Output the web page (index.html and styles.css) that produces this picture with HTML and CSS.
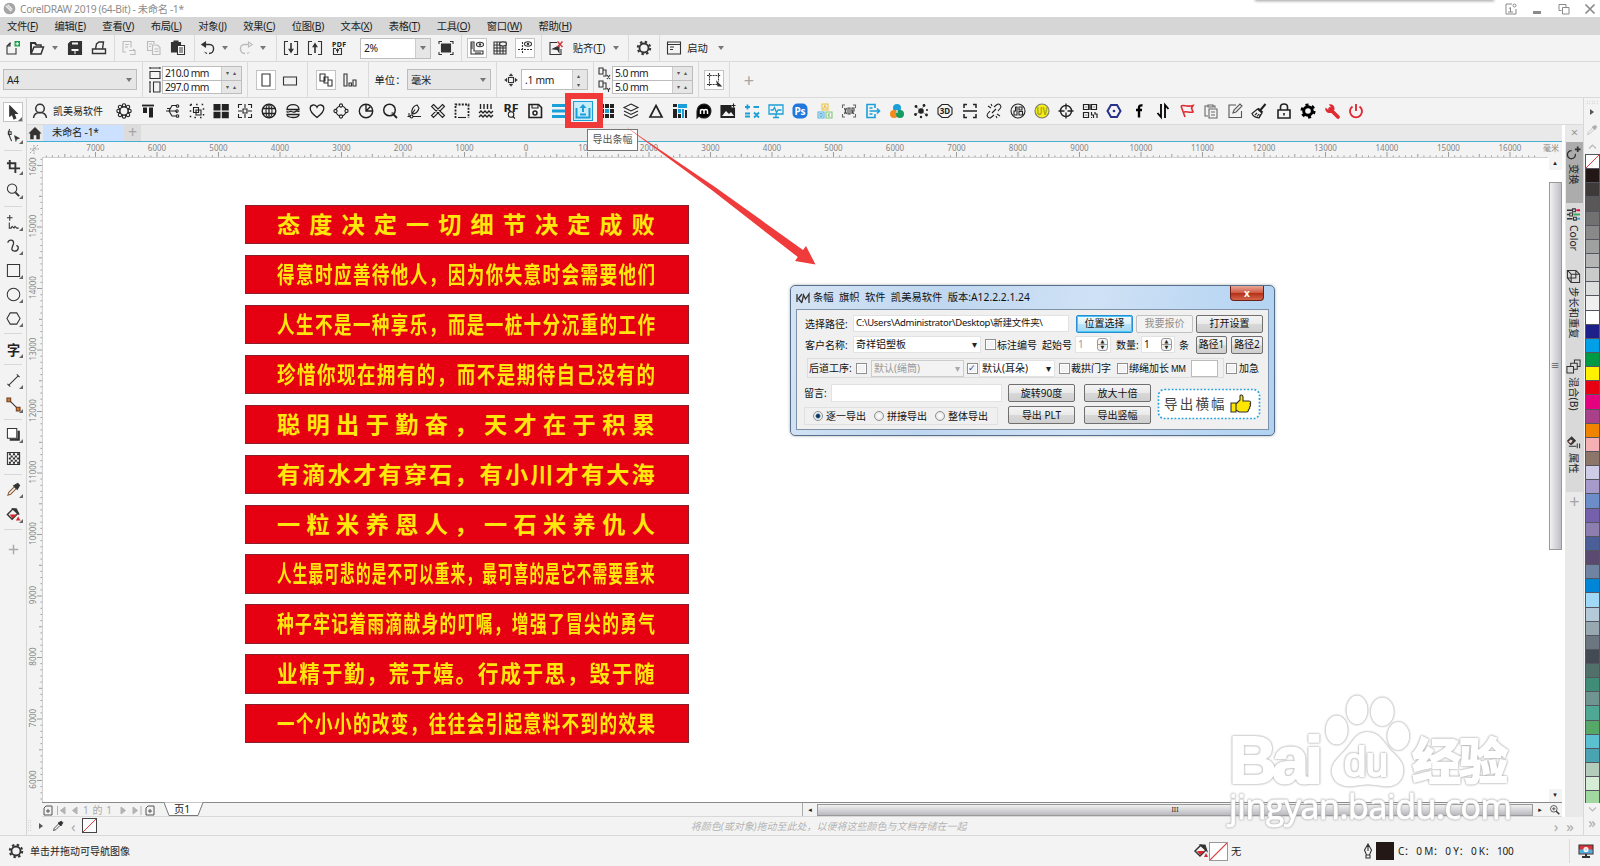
FILE: index.html
```html
<!DOCTYPE html>
<html lang="zh-CN">
<head>
    <meta charset="UTF-8">
    <meta name="viewport" content="width=device-width, initial-scale=1.0">
    <title>CorelDRAW 2019</title>
    <link rel="stylesheet" href="styles.css">
</head>
<body>

<header class="titlebar">
    <svg class="logo" viewBox="0 0 14 14"><circle cx="7" cy="7" r="6.3" fill="#a5a5a5"/><path d="M3 4l6 6M5 3l5 5" stroke="#eee" stroke-width="1.6"/></svg>
    <span>CorelDRAW 2019 (64-Bit) - 未命名 -1*</span>
    <div class="window-shade"></div>
    <div class="window-buttons">
        <svg viewBox="0 0 12 12"><path d="M7 1H1v10h10V6M3 9h5M5.500 9V4.500l-1.500 1"/><circle cx="9.500" cy="2.500" r="1.500"/></svg>
        <svg viewBox="0 0 12 12"><path d="M2 9.500h8" stroke-width="3"/></svg>
        <svg viewBox="0 0 12 12"><path d="M3.500 7.500H1v-6h7v2.500M4.500 4.500h6.500v6.500H4.500z"/></svg>
        <svg viewBox="0 0 12 12"><path d="M1.500 1.500l9 9m0-9l-9 9" stroke-width="1.700"/></svg>
    </div>
</header>

<nav class="menubar">
    <span>文件(<u>F</u>)</span><span>编辑(<u>E</u>)</span><span>查看(<u>V</u>)</span><span>布局(<u>L</u>)</span><span>对象(<u>J</u>)</span><span>效果(<u>C</u>)</span><span>位图(<u>B</u>)</span><span>文本(<u>X</u>)</span><span>表格(<u>T</u>)</span><span>工具(<u>O</u>)</span><span>窗口(<u>W</u>)</span><span>帮助(<u>H</u>)</span>
</nav>

<div class="toolbar standard">
    <svg class="i" viewBox="0 0 16 16"><path d="M6 3H5L2 6v8h9V8M2 6h3V3"/><path d="M9.500 1h5.500v5.500H9.500z" fill="#1a9c4b" stroke="none"/><path d="M12.200 2v3.500M10.500 3.800H14" stroke="#fff" stroke-width="1"/></svg>
    <svg class="i" viewBox="0 0 16 16"><path d="M2 14V3h4l1.500 2H12v2M2 14h10l2.500-7H5z" stroke-width="1.500"/><path d="M2 13L2 3h4l1 2" stroke-width="2"/></svg>
    <i class="caret"></i>
    <svg class="i" viewBox="0 0 16 16"><path class="f" d="M1.500 4L4 1.500h10.500v13h-13z"/><path d="M5 3.500h6M4.500 10h7" stroke="#f3f3f3" stroke-width="2"/><path d="M8 11v3" stroke="#f3f3f3"/></svg>
    <svg class="i" viewBox="0 0 16 16"><path d="M4 9H1.500v4.500h13V9h-3l1-7H8L5.500 4l-1 5h7" stroke-width="1.400"/></svg>
    <i class="sep"></i>
    <svg class="i off" viewBox="0 0 16 16"><path d="M2 1.500h8v6M2 1.500V12h3M4 4.500h4M4 7h3M8 10.500h6v4H9M12 9l2 1.500"/></svg>
    <svg class="i off" viewBox="0 0 16 16"><path d="M6 10.500H1.500v-9H8V4M3 4h3M3 6.500h2M6.500 5h5l2.500 2.500v7H6.500zM8.500 9h4M8.500 11.500h4"/></svg>
    <svg class="i" viewBox="0 0 16 16"><path class="f" d="M1.500 2.500h9V5H7v7H1.500z"/><path class="f" d="M4 1h4v2H4z"/><path fill="#fff" d="M7.500 5.500h7v9h-7zM9 8h4M9 10h4M9 12h4"/></svg>
    <i class="sep"></i>
    <svg class="i" viewBox="0 0 16 16"><path d="M5 4.500h4.500c6 0 5 9-.5 9" stroke-width="1.400"/><path d="M7 13.500l-3-1.500" stroke-dasharray="2 1"/><path class="f" d="M5.500 2v5L1.800 4.500z"/></svg>
    <i class="caret"></i>
    <svg class="i off" viewBox="0 0 16 16"><path d="M11 4.500H6.500c-6 0-5 9 .5 9" stroke-width="1.400"/><path d="M9 13.500l3-1.500" stroke-dasharray="2 1"/><path d="M10.500 2v5l3.700-2.500z"/></svg>
    <i class="caret"></i>
    <i class="sep"></i>
    <svg class="i" viewBox="0 0 16 16"><path d="M5 1.500H1.500v13H5M11 1.500h3.500v13H11"/><path d="M8 3v8M6.500 9.500L8 12l1.500-2.500z" stroke-width="1.600"/></svg>
    <svg class="i" viewBox="0 0 16 16"><path d="M5 1.500H1.500v13H5M11 1.500h3.500v13H11"/><path d="M8 13V5M6.500 6.500L8 4l1.500 2.500z" stroke-width="1.600"/></svg>
    <svg class="i pdf" viewBox="0 0 16 16"><text x="8" y="7" text-anchor="middle" textLength="14">PDF</text><path d="M5 8.500H2.500v6h8v-6H8M6.500 13V9M5 10.500L6.500 9 8 10.500"/></svg>
    <i></i>
    <div class="combo white"><span>2%</span><b><i class="caret"></i></b></div>
    <svg class="i" viewBox="0 0 16 16"><path class="f" d="M3.500 4h9v8h-9z"/><path d="M1 4V1.500h3M12 1.500h3V4M15 12v2.500h-3M4 14.500H1V12"/></svg>
    <i class="sep"></i>
    <span class="boxed"><svg class="i" viewBox="0 0 16 16"><path d="M2 2h3v9h9v3H2zM2 4h2M2 6h2M2 8h2M7 14v-2M9 14v-2M11 14v-2"/><ellipse cx="11" cy="4.500" rx="3.500" ry="2.200"/><circle cx="11" cy="4.500" r=".7"/></svg></span>
    <svg class="i" viewBox="0 0 16 16"><path d="M2 2v12h12V2zM2 5h12M2 8h12M2 11h12M5 2v12M8 2v12M11 2v12"/><ellipse cx="11" cy="4" rx="3.500" ry="2" fill="#f3f3f3"/></svg>
    <span class="boxed"><svg class="i" viewBox="0 0 16 16"><path d="M5.500 2v12M1 9.500h14" stroke-dasharray="2 1"/><ellipse cx="11" cy="4" rx="3.500" ry="2.200"/><circle cx="11" cy="4" r=".7"/></svg></span>
    <i class="sep"></i>
    <svg class="i" viewBox="0 0 16 16"><path d="M9 2.500H2v12h11V9" /><path class="f" d="M11 6v6l-1.500-2.500L5 9z"/><path d="M9.500 1.500L14.500 7m0-5.500L9.500 7" stroke="#d8393c" stroke-width="1.500"/></svg>
    <span class="label">贴齐(<u>T</u>)</span>
    <i class="caret"></i>
    <i class="sep"></i>
    <svg class="i" viewBox="0 0 16 16"><circle cx="8" cy="8" r="4.500" stroke-width="1.800"/><circle cx="8" cy="8" r="6.200" stroke-width="2" stroke-dasharray="2.400 2.470"/></svg>
    <i class="sep"></i>
    <svg class="i" viewBox="0 0 16 16"><path d="M1.500 2h13v12h-13zM1.500 4.500h13M4 7h4M4 9.500h3"/></svg>
    <span class="label">启动</span>
    <i class="caret"></i>
</div>

<div class="toolbar property">
    <div class="combo"><span>A4</span><i class="caret"></i></div>
    <i class="sep"></i>
    <svg class="i tall" viewBox="0 0 14 28"><path d="M2 2h10M2 1v2M12 1v2M2 5.500h10v7H2zM2 16v10M1 16h2M1 26h2M5.500 16H12v10H5.500z"/></svg>
    <div class="spin2"><p><span>210.0 mm</span><b></b></p><p><span>297.0 mm</span><b></b></p></div>
    <i class="sep"></i>
    <span class="boxed"><svg class="i" viewBox="0 0 16 16"><path d="M4 2h8v12H4z"/></svg></span>
    <svg class="i" viewBox="0 0 16 16"><path d="M1.500 5h13v8h-13z"/></svg>
    <i class="sep"></i>
    <span class="boxed"><svg class="i" viewBox="0 0 16 16"><path d="M2 2h5v7H2zM6 5h4v6H6zM10 8h4v6h-4z"/></svg></span>
    <svg class="i" viewBox="0 0 16 16"><path d="M2 2h3v12H2zM7 11h2.500v3H7zM11 8h3v6h-3z"/></svg>
    <i class="sep"></i>
    <span class="label">单位：</span>
    <div class="combo"><span>毫米</span><i class="caret"></i></div>
    <i class="sep"></i>
    <svg class="i" viewBox="0 0 16 16"><path d="M5.500 5.500h5v5h-5z"/><path class="f" d="M8 1.500L10 4H6zM8 14.500L10 12H6zM1.500 8L4 6v4zM14.500 8L12 6v4z" stroke-width=".3"/></svg>
    <div class="combo white"><span>.1 mm</span><b class="updown"></b></div>
    <i class="sep"></i>
    <svg class="i tall" viewBox="0 0 14 28"><path d="M1 2h4v6H1zM5 4h3v6H5M1 15h4v6H1zM5 17h3v6H5M9 9l3 4m0-4l-3 4M9 22l1.500 2L12 22M10.500 24v2"/></svg>
    <div class="spin2"><p><span>5.0 mm</span><b></b></p><p><span>5.0 mm</span><b></b></p></div>
    <i class="sep"></i>
    <span class="boxed"><svg class="i" viewBox="0 0 16 16"><path d="M3.500 1v13M12.500 1v9M1 3.500h14M1 12.500h10" stroke-dasharray="2 .8"/><path class="f" d="M11 10l4 4h-3z"/></svg></span>
    <i class="sep"></i>
    <span class="plus">+</span>
</div>

<div class="workspace">
    <aside class="toolbox" id="toolbox"></aside>

    <main class="main">
        <div class="plugin-bar">
            <svg class="i" viewBox="0 0 16 16"><circle cx="8" cy="5.500" r="4.300" stroke-width="1.500"/><path d="M1.500 15c.5-4 3-5.500 6.500-5.500s6 1.500 6.500 5.500" stroke-width="1.500"/></svg>
            <span class="brand">凯美易软件</span>
            <div class="plugin-icons" id="plugin-icons"></div>
        </div>

        <div class="middle">
            <section class="document">
                <div class="tabs">
                    <svg viewBox="0 0 16 16"><path d="M8 1L0.500 8.500H2.500V15H6.500V10.500H9.500V15H13.500V8.500H15.500z" fill="#333"/></svg>
                    <span class="tab">未命名 -1*</span>
                    <span class="add">+</span>
                </div>
                <svg class="ruler-h" id="ruler-h" width="1535" height="15"></svg>
                <div class="page-row">
                    <svg class="ruler-v" id="ruler-v" width="15" height="645"></svg>
                    <div class="canvas">
                        <div class="banners" id="banners"></div>
                    </div>
                    <div class="vscroll">
                        <i class="arrow-up"></i>
                        <div class="vthumb"><span>≡</span></div>
                        <i class="arrow-down"></i>
                    </div>
                </div>
                <div class="page-nav">
                    <svg viewBox="0 0 112 12"><path d="M3 2h6v9H1V4zM5 5v4M3 7h4M105 2h6v9h-8V4zM107 5v4M105 7h4" class="nav-doc"/><path d="M14.500 2v9M22 3v7l-4.500-3.500zM34 3v7l-4.500-3.500zM78 3v7l4.500-3.500zM90 3v7l4.500-3.500zM98 2v9" class="nav-off"/><text x="40" y="10" textLength="29">1 的 1</text></svg>
                    <div class="page-tab"><svg viewBox="0 0 40 14"><path d="M0 .5L5 13.500H34L39 .5"/></svg><span>页1</span></div>
                    <div class="hscroll">
                        <i class="arrow-left"></i>
                        <div class="hthumb"><span>III</span></div>
                        <i class="arrow-right"></i>
                        <svg class="i" viewBox="0 0 16 16"><circle cx="7" cy="7" r="4.800"/><path d="M10.500 10.500L15 15" stroke-width="2"/><path d="M7 4.500v5M4.500 7h5"/></svg>
                    </div>
                </div>
            </section>

            <aside class="dockers">
                <span class="close">×</span>
                <div class="docker active"><svg class="i" viewBox="0 0 16 16"><path d="M10 8.500a4.300 4.300 0 1 1-4-3.500" stroke-width="1.400"/><path d="M12.500 .5v6M9.500 3.500h6" stroke-width="1.800"/></svg><span>变换</span></div>
                <div class="docker color"><svg class="i" viewBox="0 0 16 16"><path d="M1 3.500h8M1 8h5M1 12.500h6" stroke-width="1.600"/><path d="M11 3.500h4" stroke="#e4003f" stroke-width="2"/><path d="M8 8h7" stroke="#3aa655" stroke-width="2"/><path d="M10 12.500h5" stroke="#2aa3dd" stroke-width="2"/><path d="M7 2h3v3H7zM4 6.500h3v3H4zM8 11h3v3H8z" fill="#ddd"/></svg><span>Color</span></div>
                <div class="docker step"><svg class="i" viewBox="0 0 16 16"><path d="M1.500 1.500h9v8h-9zM1.500 9.500l4 5h9v-9l-4-4M5.500 14.500v-9h9M5.500 5.500l-4-4"/></svg><span>步长和重复</span></div>
                <div class="docker blend"><svg class="i" viewBox="0 0 16 16"><path d="M1 8h7v7H1zM5 8V4.500h7V11H8M9 4.500V1h6v7h-3"/></svg><span>混合(B)</span></div>
                <div class="docker attr"><svg class="i" viewBox="0 0 16 16"><path class="f" d="M2 6l4-4 4 4-4 4z"/><path d="M2 7l3-3 3 2-3 4z" fill="#f3d1c0"/><path d="M3 12h8M12 9v5M14.500 9v5"/></svg><span>属性</span></div>
                <span class="plus">+</span>
            </aside>
        </div>

        <div class="doc-palette">
            <i class="grip"></i><i class="tri"></i>
            <svg class="i dropper" viewBox="0 0 16 16"><path d="M2 14l1-3 6-6 2 2-6 6z"/><path class="f" d="M8 4l4 4 2.500-4.500-2-2z"/></svg>
            <span class="chev">‹</span>
            <span class="none"></span>
            <em>将颜色(或对象)拖动至此处，以便将这些颜色与文档存储在一起</em>
            <span class="chev">›</span><span class="chev last">»</span>
        </div>
    </main>

    <aside class="palette">
        <i class="grip"></i>
        <i class="tri"></i>
        <svg class="i off dropper" viewBox="0 0 16 16"><path d="M2 14l1-3 6-6 2 2-6 6z"/><path d="M8 4l4 4 2.500-4.500-2-2z" fill="#aaa"/></svg>
        <svg class="i off up" viewBox="0 0 16 16"><path d="M3 11l5-5 5 5" stroke-width="2"/></svg>
        <div class="swatches" id="swatches"></div>
        <svg class="i off down" viewBox="0 0 16 16"><path d="M3 5l5 5 5-5" stroke-width="2"/></svg>
        <span class="chev">»</span>
    </aside>
</div>

<footer class="statusbar">
    <svg class="i" viewBox="0 0 16 16"><circle cx="8" cy="8" r="4.500" stroke-width="1.800"/><circle cx="8" cy="8" r="6.200" stroke-width="2" stroke-dasharray="2.400 2.470"/></svg>
    <span class="hint">单击并拖动可导航图像</span>
    <svg class="i" viewBox="0 0 16 16"><path d="M2 8l6-6 5 5-6 6z" stroke-width="1.500"/><path d="M4 8h8l-5 4z" fill="#d7262c" stroke="none"/><path class="f" d="M7 2l7 6-2-6z"/><path d="M13 10l2 4h-4z" fill="#d7262c" stroke="none"/></svg>
    <span class="none big"></span>
    <span class="fill-name">无</span>
    <svg class="i pen" viewBox="0 0 16 16"><path d="M8 1l3.500 6-2 5h-3l-2-5zM8 2v6M6 12v3h4v-3"/></svg>
    <span class="black"></span>
    <span class="cmyk">C： 0 M： 0 Y： 0 K： 100</span>
    <i class="sep"></i>
    <svg class="i proof" viewBox="0 0 16 16"><path d="M1 2h14v9H1z" fill="#d8343a"/><path d="M1.500 6.500h13v4h-13z" fill="#4aaede" stroke="none"/><circle cx="8" cy="6.500" r="2" fill="#ddd" stroke="#fff"/><path d="M4 14h8M8 11v3" stroke-width="2"/></svg>
</footer>

<div class="dialog">
    <div class="dialog-title">
        <svg viewBox="0 0 14 12"><path d="M1 2v8M2 7l4-5M2 6l4 5M6 10l1.500-7 2 4L13 2v9" fill="none" stroke="#333" stroke-width="1.300"/></svg>
        <span>条幅&nbsp; 旗帜&nbsp; 软件&nbsp; 凯美易软件&nbsp; 版本:A12.2.2.1.24</span>
        <button class="x">x</button>
    </div>
    <div class="client">
        <div class="row r1">
            <label>选择路径:</label>
            <div class="field path">C:\Users\Administrator\Desktop\新建文件夹\</div><i></i>
            <button class="focus">位置选择</button><i></i>
            <button class="disabled">我要报价</button><i></i>
            <button>打开设置</button>
        </div>
        <div class="row r2">
            <label>客户名称:</label>
            <div class="field drop">奇祥铝塑板</div><i></i>
            <i class="check"></i><label>标注编号</label>
            <label>起始号</label>
            <div class="field num gray">1<b></b></div><i></i>
            <label>数量:</label>
            <div class="field num">1<b></b></div><i></i>
            <label>条</label>
            <button>路径1</button><i></i>
            <button>路径2</button>
        </div>
        <div class="row r3">
            <label>后道工序:</label>
            <i class="check"></i><i></i>
            <div class="field drop gray">默认(绳筒)</div><i></i>
            <i class="check on"></i>
            <div class="field drop">默认(耳朵)</div><i></i>
            <i class="check"></i><label>裁拱门字</label>
            <i class="check"></i><label>绑绳加长<small> MM</small></label>
            <div class="field length"></div><i></i>
            <i class="check"></i><label>加急</label>
        </div>
        <div class="lower">
            <div class="left">
                <div class="message"><label>留言:</label><div class="field"></div></div>
                <div class="radios"><span class="radio on"></span>逐一导出<span class="radio"></span>拼接导出<span class="radio"></span>整体导出</div>
            </div>
            <div class="buttons">
                <button>旋转90度</button><button>放大十倍</button>
                <button>导出 PLT</button><button>导出竖幅</button>
            </div>
            <div class="export">
                <svg class="dots" viewBox="0 0 104 32"><rect x="1.500" y="1.500" width="101" height="29" rx="6"/></svg>
                <span>导出横幅</span>
                <svg class="thumb" viewBox="0 0 22 20"><path d="M1 9h5v9H1zM6 10l4-4V2c0-1.500 3-1.500 3 1v4h6c2 0 2 2.500 1 3 1 1 .5 2.500-.5 3 .5 1 0 2-1 2.500 0 1.500-.5 2.500-2 2.500H9l-3-2z" fill="#ffe600" stroke="#333" stroke-width="1.100"/></svg>
            </div>
        </div>
    </div>
</div>

<svg class="watermark" viewBox="0 0 300 150" width="300" height="150">
    <g class="mark">
        <text class="bai" x="9" y="103" textLength="94">Bai</text>
        <ellipse cx="116.700" cy="50" rx="10" ry="13.500"/>
        <ellipse cx="137" cy="30" rx="9.500" ry="13.500"/>
        <ellipse cx="162.300" cy="31.700" rx="10.500" ry="13.300"/>
        <ellipse cx="178.300" cy="56" rx="10" ry="13"/>
        <path d="M147 53c13 0 17 12 24 19 9 8 13 14 11 22-2 9-10 13-20 11-9-2-19-2-28 0-12 2-19-3-21-11-2-9 5-15 12-22 8-8 11-19 22-19z"/>
        <text class="du" x="124" y="96" textLength="44">du</text>
        <text class="jy" x="192" y="99" textLength="96">经验</text>
    </g>
    <text class="url" x="9" y="139" textLength="283">jingyan.baidu.com</text>
</svg>

<div class="highlight"></div>
<div class="tooltip">导出条幅</div>
<svg class="pointer" viewBox="0 0 192 140" width="192" height="140"><path d="M.5 .5L90 61 178 124 181 120 190.500 138.500 170 135 172.800 131 88 65z" fill="#ef3b3b"/></svg>

<script src="script.js"></script>
</body>
</html>
```
FILE: styles.css
```css
* {
    box-sizing: border-box;
}
body {
    margin: 0;
    width: 1600px;
    height: 866px;
    overflow: hidden;
    display: flex;
    flex-direction: column;
    position: relative;
    background: #f3f3f3;
    color: #222;
    font: 10.3px/14px "Noto Sans", "Noto Sans CJK SC", sans-serif;
    white-space: nowrap;
}
p {
    margin: 0;
}
.i {
    width: 16px;
    height: 16px;
    flex: none;
    fill: none;
    stroke: #333;
    stroke-width: 1.1;
}
.i .f {
    fill: #333;
}
.i text {
    fill: #222;
    stroke: none;
    font-weight: bold;
}
.i.off {
    stroke: #bbb;
}
.caret {
    width: 0;
    height: 0;
    border: 3px solid transparent;
    border-top: 4px solid #777;
    border-bottom: 0;
}
.sep {
    width: 1px;
    height: 100%;
    background: #dadada;
}
.plus {
    color: #a5a5a5;
    font-size: 18px;
}

/* title and menu */
.titlebar {
    height: 17px;
    background: #fff;
    color: #8d8d8d;
    display: flex;
    align-items: center;
    padding-left: 3px;
    gap: 4px;
    flex: none;
    letter-spacing: -.35px;
}
.logo {
    width: 13px;
}
.window-shade {
    width: 239px;
    height: 2px;
    margin: -2px 7px 0 auto;
    align-self: flex-start;
    background: #bbb;
    box-shadow: 0 1px 3px #888;
}
.window-buttons {
    display: flex;
    gap: 14.3px;
    padding-right: 4px;
}
.window-buttons svg {
    width: 12px;
    height: 12px;
    fill: none;
    stroke: #8a8a8a;
}
.menubar {
    height: 18px;
    flex: none;
    background: #d6d6d6;
    display: flex;
    align-items: center;
    padding-left: 7px;
    gap: 16.6px;
    letter-spacing: -.25px;
}

/* toolbars */
.toolbar {
    display: grid;
    align-items: center;
    justify-items: center;
    flex: none;
    border-bottom: 1px solid #dadada;
}
.standard {
    height: 27px;
    grid-template-columns: 26px 22px 13px 27px 22px 8px 22px 28px 20px 12px 16px 18px 24px 10px 16px 14px 34px 13px 15px 71px 29px 3px 27px 20px 29px 4px 26px 40px 13px 12px 20px 10px 20px 27px 20px;
}
.property {
    height: 36px;
    padding-left: 3px;
    grid-template-columns: 134px 10px 15px 80px 10px 28px 19px 16px 22px 26px 10px 34px 84px 10px 20px 67px 10px 14px 81px 10px 22px 8px 32px;
}
.pdf text {
    font-size: 7px;
}
.tall {
    width: 14px;
    height: 28px;
}
.boxed {
    width: 20px;
    height: 20px;
    display: flex;
    align-items: center;
    justify-content: center;
    background: #fff;
    border: 1px solid #c4c4c4;
}
.combo {
    width: 100%;
    height: 21px;
    display: flex;
    align-items: center;
    justify-content: space-between;
    padding: 0 4px 0 3px;
    background: #e6e6e6;
    border: 1px solid #bdbdbd;
    letter-spacing: -.3px;
}
.combo.white {
    background: #fff;
    padding-right: 0;
}
.combo b {
    width: 15px;
    height: 100%;
    background: #e6e6e6;
    border-left: 1px solid #ccc;
    display: flex;
    align-items: center;
    justify-content: center;
}
.updown::after {
    content: "▴ ▾";
    width: 6px;
    white-space: normal;
    font: 6px/9px "DejaVu Sans", sans-serif;
    color: #555;
}
.spin2 {
    width: 100%;
    border: 1px solid #bdbdbd;
}
.spin2 p {
    height: 13px;
    display: flex;
    line-height: 13px;
    background: #fff;
}
.spin2 p + p {
    border-top: 1px solid #bdbdbd;
}
.spin2 span {
    flex: 1;
    padding-left: 2px;
    letter-spacing: -.55px;
}
.spin2 b {
    width: 20px;
    background: #e6e6e6;
    border-left: 1px solid #ccc;
}
.spin2 b::after {
    content: "▾ ▴";
    font: 6px/12px "DejaVu Sans", sans-serif;
    letter-spacing: 1px;
    color: #555;
    display: block;
    text-align: center;
}

/* work area */
.workspace {
    height: 738px;
    flex: none;
    display: flex;
    border-bottom: 1px solid #d8d8d8;
}
.toolbox {
    width: 27px;
    padding-top: 2px;
    border-right: 1px solid #d4d4d4;
    display: grid;
    align-content: start;
    align-items: center;
    justify-items: center;
    grid-template-rows: 24px 22px 9px 23px 25px 6px 26px 22px 26px 22px 26px 5px 26px 5px 26px 22px 8px 23px 25px 6px 25px 24px 6px 34px;
}
.toolbox .i {
    width: 15px;
    height: 15px;
}
.toolbox hr {
    width: 18px;
    margin: 0;
    border: 0;
    border-top: 1px solid #d8d8d8;
}
.tool {
    position: relative;
    display: flex;
}
.tool.selected {
    width: 20px;
    height: 20px;
    align-items: center;
    justify-content: center;
    background: #fff;
    border: 1px solid #c4c4c4;
}
.tool.flyout::after {
    content: "";
    position: absolute;
    right: -2px;
    bottom: -1px;
    border: 2px solid #666;
    border-top-color: transparent;
    border-left-color: transparent;
}
.tool.selected::after {
    right: 0;
    bottom: 0;
}
.main {
    width: 1556px;
    display: flex;
    flex-direction: column;
}
.plugin-bar {
    height: 27px;
    display: flex;
    align-items: center;
    padding-left: 5px;
    border-bottom: 1px solid #dadada;
}
.brand {
    width: 64px;
    padding-left: 5px;
    font-size: 10px;
}
.plugin-icons {
    display: flex;
}
.plugin-icons span {
    width: 24.17px;
    display: flex;
    justify-content: center;
}
.plugin-icons .i {
    stroke: #222;
    overflow: visible;
}
.plugin-icons .i .f {
    fill: #222;
}
.middle {
    height: 692px;
    display: flex;
}
.document {
    width: 1535px;
    display: flex;
    flex-direction: column;
}
.tabs {
    height: 17px;
    background: #e9e9e9;
    border-bottom: 1px solid #45b0d0;
    display: flex;
    align-items: center;
}
.tabs svg {
    width: 14px;
    height: 14px;
    margin: 0 1px;
}
.tab {
    width: 81px;
    height: 16px;
    line-height: 15px;
    padding-left: 9px;
    background: #cbe1ff;
    letter-spacing: -.25px;
}
.add {
    width: 17px;
    height: 16px;
    background: #dcdcdc;
    color: #a5a5a5;
    text-align: center;
    font-size: 16px;
}
.ruler-h,
.ruler-v {
    display: block;
    flex: none;
    background: #f3f3f3;
    font: 8px "Noto Sans", "Noto Sans CJK SC", sans-serif;
    fill: #858585;
}
.page-row {
    height: 645px;
    display: flex;
}
.canvas {
    width: 1506px;
    background: #fff;
    border: 1px solid #d0d0d0;
    border-width: 1px 0 0 1px;
}
.banners {
    width: 646px;
    padding: 47.200px 0 0 202px;
    display: flex;
    flex-direction: column;
    gap: 10.6px;
}
.banner {
    height: 39.3px;
    background: #e50012;
    border: 1px solid #86202c;
    padding-left: 31px;
    flex: none;
}
.banner span {
    display: inline-block;
    transform-origin: left center;
    color: #ffe70d;
    font: bold 23.2px/34.500px "Noto Sans CJK SC", sans-serif;
}
.vscroll {
    width: 14px;
    background: #fff;
    display: flex;
    flex-direction: column;
    align-items: center;
}
.arrow-up,
.arrow-down {
    width: 13px;
    height: 13px;
    background: #f3f3f3;
    text-align: center;
    font: 7px/13px "DejaVu Sans", sans-serif;
}
.arrow-up::after {
    content: "▴";
}
.arrow-down {
    margin-top: auto;
}
.arrow-down::after {
    content: "▾";
}
.vthumb {
    width: 13px;
    height: 368px;
    margin-top: 12px;
    display: flex;
    align-items: center;
    justify-content: center;
    background: linear-gradient(90deg, #f2f2f2, #d9d9de 45%, #bfbfc6);
    border: 1px solid #999;
    font-size: 9px;
}
.page-nav {
    height: 15px;
    display: flex;
    margin-left: 15px;
    border-top: 1px solid #8a8a8a;
    border-bottom: 1px solid #d8d8d8;
}
.page-nav > svg {
    width: 112px;
    height: 12px;
    margin: 1px 0 0 1px;
}
.nav-doc {
    fill: none;
    stroke: #555;
}
.nav-off {
    fill: #b3b3b3;
    stroke: #b3b3b3;
}
.page-nav text {
    fill: #aaa;
    font-size: 10px;
}
.page-tab {
    width: 40px;
    height: 14px;
    margin: -1px 0 0 9px;
    position: relative;
}
.page-tab svg {
    position: absolute;
    width: 40px;
    height: 14px;
    fill: #fff;
    stroke: #777;
}
.page-tab span {
    position: relative;
    left: 10px;
    line-height: 12px;
}
.hscroll {
    margin-left: auto;
    width: 760px;
    display: flex;
    align-items: center;
    border-left: 1px solid #aaa;
}
.arrow-left,
.arrow-right {
    width: 14px;
    font: 7px/12px "DejaVu Sans", sans-serif;
    text-align: center;
}
.arrow-left::after {
    content: "◂";
}
.arrow-right::after {
    content: "▸";
}
.hthumb {
    width: 716px;
    height: 12px;
    background: linear-gradient(#f1f1f1, #d5d5d9 50%, #b9b9be);
    border: 1px solid #999;
    text-align: center;
    font-size: 7px;
    line-height: 10px;
}
.hscroll .i {
    width: 11px;
    height: 11px;
    margin-left: 2px;
}
.dockers {
    width: 21px;
    padding-left: 1px;
    border-left: 3px solid #fff;
    background: #e9e9e9;
    display: flex;
    flex-direction: column;
}
.close {
    height: 17px;
    text-align: center;
    color: #999;
    font-size: 13px;
}
.docker {
    background: #d9d9d9;
    display: flex;
    flex-direction: column;
    align-items: center;
    gap: 3px;
    height: 62px;
    padding: 4px 2px 0 0;
}
.docker.active {
    background: #acacac;
    height: 61px;
}
.docker .i {
    width: 15px;
    height: 15px;
}
.docker span {
    writing-mode: vertical-rl;
    text-orientation: sideways;
    line-height: 16px;
}
.docker.step {
    height: 90px;
}
.docker.blend {
    height: 76px;
}
.docker.attr {
    height: 61px;
}
.dockers .plus {
    height: 18px;
    line-height: 18px;
    text-align: center;
}
.doc-palette {
    height: 17px;
    display: flex;
    align-items: center;
}
.grip {
    width: 5px;
    height: 13px;
    background: radial-gradient(#bbb 35%, transparent 40%) 0 0 / 2.500px 2.500px;
}
.tri {
    border: 3px solid transparent;
    border-left: 4px solid #555;
    border-right: 0;
}
.doc-palette .tri {
    margin: 0 9px 0 7px;
}
.dropper {
    width: 12px;
    height: 12px;
}
.chev {
    color: #aaa;
    font-size: 15px;
}
.doc-palette .chev {
    margin: 0 6px 0 7px;
}
.doc-palette .chev.last {
    margin: 0 9px 0 2px;
}
.none {
    width: 15px;
    height: 15px;
    border: 1px solid #444;
    background: linear-gradient(to bottom right, #fff 46%, #d44 49%, #d44 51%, #fff 54%);
}
.doc-palette em {
    margin: 0 auto;
    padding-left: 14px;
    color: #b3b3b3;
    font-size: 10px;
}
.palette {
    width: 17px;
    border-left: 1px solid #d8d8d8;
    display: flex;
    flex-direction: column;
    align-items: center;
}
.palette .grip {
    width: 12px;
    height: 5px;
    margin: 2px 0 4px;
}
.palette .dropper {
    margin-top: 9px;
}
.palette .up {
    width: 11px;
    height: 11px;
    margin: 5px 0 2px;
}
.palette .down {
    width: 11px;
    height: 11px;
    margin-top: 1px;
}
.swatches {
    width: 15px;
    height: 649px;
    overflow: hidden;
    flex: none;
}
.swatch {
    height: 14.15px;
    border: 1px solid #55555f;
    border-bottom: 0;
}
.swatch.none {
    width: 15px;
}

/* status bar */
.statusbar {
    height: 30px;
    display: flex;
    align-items: center;
    padding-left: 8px;
}
.hint {
    width: 1162px;
    padding-left: 6px;
    font-size: 10px;
    margin-right: 7px;
}
.none.big {
    width: 19px;
    height: 19px;
    border-color: #999;
}
.fill-name {
    width: 132px;
    padding-left: 3px;
}
.black {
    width: 18px;
    height: 18px;
    background: #231815;
}
.cmyk {
    width: 175px;
    padding-left: 4px;
    font-size: 10px;
    letter-spacing: -.2px;
}
.proof {
    margin-left: 8px;
}
.statusbar .sep {
    height: 24px;
}

/* export dialog */
.dialog {
    position: absolute;
    left: 790px;
    top: 285px;
    width: 485px;
    height: 151px;
    padding: 0 5px;
    background: linear-gradient(100deg, #d5e4f4, #bfd7f0 30%, #cfe1f5 60%, #b0d2f2);
    border: 1px solid #566f8c;
    border-radius: 5px;
    box-shadow: 0 0 3px #aaa;
    font-size: 10px;
    color: #111;
}
.dialog-title {
    height: 23px;
    display: flex;
    align-items: center;
    gap: 3px;
}
.dialog-title svg {
    width: 14px;
    height: 12px;
}
.dialog-title span {
    font-size: 10.3px;
    padding-bottom: 2px;
}
.dialog button {
    width: 100%;
    height: 18px;
    padding: 0;
    font: inherit;
    line-height: 15px;
    color: #111;
    background: linear-gradient(#f4f4f4, #e9e9e9 50%, #d8d8d8 52%, #cfcfcf);
    border: 1px solid #707070;
    border-radius: 2px;
}
.dialog .x {
    width: 34px;
    height: 15px;
    margin-left: auto;
    margin-right: 5px;
    align-self: flex-start;
    color: #fff;
    font-weight: bold;
    line-height: 11px;
    background: linear-gradient(#e8a795, #cf5b45 48%, #b52f18 52%, #d3664c);
    border-color: #6d2018;
    border-top: 0;
    border-radius: 0 0 4px 4px;
}
.dialog .focus {
    border-color: #2a8dd4;
    background: linear-gradient(#f2fbff, #d9f1fb 50%, #b9e4f8 52%, #a5daf5);
    box-shadow: inset 0 0 0 1px #48c6f3;
}
.dialog .disabled {
    color: #8f8f8f;
    background: #f3f3f3;
    border-color: #c2c2c2;
}
.client {
    height: 121px;
    background: #f0f0f0;
    border: 1px solid #7f92a8;
}
.row {
    display: grid;
    align-items: center;
    height: 19px;
    width: 466px;
}
.r1 {
    margin: 4px 0 0 8px;
    grid-template-columns: 48px 216px 7px 57px 3px 57px 3px 67px;
}
.r2 {
    margin: 2px 0 0 8px;
    grid-template-columns: 48px 128px 4px 12px 45px 33px 36px 5px 25px 34px 4px 17px 31px 4px 32px;
}
.r3 {
    margin: 4px 0 0 10px;
    padding-left: 2px;
    width: 458px;
    height: 20px;
    grid-template-columns: 47px 11px 4px 93px 3px 12px 76px 4px 12px 46px 12px 62px 27px 8px 13px 24px;
    background: linear-gradient(#f0f0f0, #f0f0f0) 1px 1px / 415px 18px no-repeat,
        linear-gradient(#ddd, #ddd) 0 0 / 417px 20px no-repeat;
}
.field {
    height: 17px;
    background: #fff;
    border: 1px solid #e2e2e2;
    padding-left: 2px;
    line-height: 14px;
    font-size: 10px;
    display: flex;
    justify-content: space-between;
}
.field.length {
    border-color: #bbb;
}
.path {
    font-size: 9.5px;
    letter-spacing: -.3px;
}
.gray {
    color: #999;
}
.drop::after {
    content: "▾";
    color: #222;
    padding-right: 3px;
    line-height: 14px;
}
.drop.gray {
    background: #f3f3f3;
    border-color: #ccc;
}
.drop.gray::after {
    color: #aaa;
}
.num b {
    width: 11px;
    height: 13px;
    margin: 1px 2px 0 0;
    border: 1px solid #999;
    border-radius: 3px;
    background: linear-gradient(#f3f3f3 46%, #999 47%, #999 53%, #f3f3f3 54%);
}
.num b::after {
    content: "▲ ▼";
    display: block;
    width: 9px;
    white-space: normal;
    text-align: center;
    color: #222;
    font: 5px/5.500px "DejaVu Sans", sans-serif;
}
.check {
    width: 11px;
    height: 11px;
    background: #f3f3f3;
    border: 1px solid #8e8f8f;
    box-shadow: inset 0 0 0 1px #fff;
}
.check.on::after {
    content: "✓";
    display: block;
    color: #34499a;
    font: bold 9px/9px "DejaVu Sans", sans-serif;
}
.dialog small {
    font-size: 8.5px;
    letter-spacing: -.3px;
}
.lower {
    display: flex;
    margin: 6px 0 0 7px;
}
.left {
    width: 204px;
}
.message {
    display: flex;
    height: 18px;
}
.message label {
    width: 27px;
    line-height: 18px;
}
.message .field {
    width: 171px;
    height: 18px;
}
.radios {
    width: 194px;
    height: 18px;
    margin-top: 5px;
    border: 1px solid #e0e0e0;
    display: flex;
    align-items: center;
    padding-left: 8px;
}
.radio {
    width: 10px;
    height: 10px;
    margin: 0 3px 0 8px;
    border: 1px solid #8e8f8f;
    border-radius: 50%;
    background: radial-gradient(#fff, #ddd);
}
.radio.on {
    margin-left: 0;
    background: radial-gradient(#16334f 25%, #4b93c4 40%, #eee 50%);
}
.buttons {
    width: 143px;
    display: grid;
    grid-template-columns: 67px 67px;
    gap: 4px 9px;
    align-content: start;
}
.export {
    width: 104px;
    height: 32px;
    margin: 4px 0 0 6px;
    position: relative;
    display: flex;
    align-items: center;
    padding-left: 7px;
    gap: 3px;
}
.dots {
    position: absolute;
    left: 0;
    top: 0;
    fill: #fff;
    stroke: #2aa3dd;
    stroke-width: 1.700;
    stroke-dasharray: 1.800 1.800;
}
.export span {
    position: relative;
    font-size: 13.5px;
    letter-spacing: 2.200px;
    color: #444;
}
.thumb {
    position: relative;
    width: 22px;
    height: 20px;
}

/* overlays */
.watermark {
    position: absolute;
    left: 1220px;
    top: 680px;
}
.mark > * {
    fill: #fff;
    stroke: #fff;
    stroke-width: 2;
    font-weight: bold;
    filter: drop-shadow(0 0 .8px #aaa) drop-shadow(0 0 .5px #ccc);
}
.bai {
    font-family: "Liberation Sans", sans-serif;
    font-size: 66px;
}
.mark .du {
    font-family: "Liberation Sans", sans-serif;
    font-size: 40px;
    font-weight: normal;
}
.jy {
    font-family: "Noto Sans CJK SC", sans-serif;
    font-size: 49px;
}
.url {
    font: 34px "Open Sans", sans-serif;
    fill: #fff;
    stroke: #fff;
    stroke-width: .8;
    filter: drop-shadow(0 0 1px #aaa) drop-shadow(0 0 .5px #ccc);
}
.highlight {
    position: absolute;
    left: 565px;
    top: 93px;
    width: 38px;
    height: 35px;
    border: 6px solid #f03a3a;
}
.tooltip {
    position: absolute;
    left: 587px;
    top: 129px;
    width: 51px;
    height: 22px;
    background: #fff;
    border: 1px solid #777;
    color: #555;
    font-size: 10px;
    line-height: 19px;
    text-align: center;
}
.pointer {
    position: absolute;
    left: 625px;
    top: 126px;
}
```
FILE: script.js
```js
const BLUE = '#1b9fd8';
const RED = '#e02b33';

function icon(body) {
    return `<svg class="i" viewBox="0 0 16 16">${body}</svg>`;
}

// Plugin toolbar, left to right
const pluginIcons = [
    '<circle cx="8" cy="8" r="4"/><g><circle cx="8" cy="2.500" r="1.700"/><circle cx="12" cy="4" r="1.700"/><circle cx="13.500" cy="8" r="1.700"/><circle cx="12" cy="12" r="1.700"/><circle cx="8" cy="13.500" r="1.700"/><circle cx="4" cy="12" r="1.700"/><circle cx="2.500" cy="8" r="1.700"/><circle cx="4" cy="4" r="1.700"/></g><circle cx="8" cy="8" r="4" fill="#f3f3f3"/>',
    '<path class="f" d="M3 4.500h4v5.500H3zM9 4.500h4V14.500H9z" stroke="none"/><path d="M2 2.500h12" stroke-width="1.800"/>',
    '<path d="M2 8h6M13 2.500H8L5 8l3 5h4M6 5.500H3M8 8h4l1 2"/><circle cx="13.500" cy="3" r="1.300"/><circle cx="13" cy="8" r="1.200"/><circle cx="13.500" cy="13" r="1.300"/>',
    '<path d="M1.500 1.500h13v13h-13z" stroke-dasharray="1.500 4.100" stroke-width="1.500"/><path d="M4.500 4.500h5v5h-5zM7 7h5v5H7z"/>',
    '<path class="f" d="M.5 1h7v6.500h-7zM8.800 1h7v6.500h-7zM.5 8.800h7v6.500h-7zM8.800 8.800h7v6.500h-7z" stroke="none"/>',
    '<path d="M5 1.500H1.500V5M11 1.500h3.500V5M5 14.500H1.500V11M11 14.500h3.500V11M6 6h4v4H6zM8 1v4M8 11v4M1 8h4M11 8h4"/>',
    '<circle cx="8" cy="8" r="6.800" stroke-width="1.400"/><ellipse cx="8" cy="8" rx="3" ry="6.800"/><path d="M1.500 5.500h13M1.500 10.500h13M8 1v14" stroke-width="1.300"/>',
    '<path d="M2 6.500c0-6.500 12-6.500 12 0zM1.500 8.500c2 2 3-1 5 0s3 1 4 0 2-.5 4 0M2 11.500h12c0 4-12 4-12 0z" stroke-width="1.300"/>',
    '<path d="M8 14.500C2 10 1 7.500 1.200 5 1.500 1.500 6.500.8 8 4.200 9.500.8 14.500 1.500 14.800 5c.2 2.500-.8 5-6.800 9.500z" stroke-width="1.300"/>',
    '<circle cx="8" cy="8" r="5"/><circle cx="8" cy="2.500" r="1.600" fill="#f3f3f3"/><circle cx="8" cy="13.500" r="1.600" fill="#f3f3f3"/><circle cx="2.500" cy="8" r="1.600" fill="#f3f3f3"/><circle cx="13.500" cy="8" r="1.600" fill="#f3f3f3"/>',
    '<circle cx="8" cy="8" r="6.700" stroke-width="1.400"/><path d="M8 1.500V8h6.500M8 8l4.500-4.500" stroke-width="1.400"/>',
    '<circle cx="7.500" cy="7" r="5.800" stroke-width="1.500"/><path d="M11.500 11.500L15 15" stroke-width="1.800"/><path d="M9.500 10h2"/>',
    '<path d="M6 11c-1-4 1-8 5-9l2 3c-1 4-4 6-7 6zM9 6.500L6 11M1.500 13.500h3M7 13.500h8M3 10v3"/><circle cx="5.500" cy="13.500" r="1.500"/>',
    '<path d="M3.500 1.500L14.500 12.500l-2 2L1.500 3.500zM12.500 1.500l2 2-11 11-2-2z"/>',
    '<path d="M1.500 15v-13.500h13V15" stroke-width="1.800" stroke-dasharray="2 1.300"/><path d="M4 14.500h8"/>',
    '<path d="M2.500 1v5M6 1v5M9.500 1v5M13 1v5" stroke-width="1.400"/><path d="M1 10l2-2 2 2 2-2 2 2 2-2 2 2 2-2M1 14l2-2 2 2 2-2 2 2 2-2 2 2 2-2" stroke-width="1.300"/>',
    '<text x=".5" y="9" font-size="11" textLength="15" lengthAdjust="spacingAndGlyphs">RF</text><circle cx="8" cy="11.500" r="2.800" fill="#f3f3f3"/><path d="M10 13.500l2 2"/>',
    '<path d="M2 1.500h9.500l3 3v10H2z" stroke-width="1.600"/><path d="M5 2v3h6V2"/><circle cx="8" cy="10" r="2" stroke-width="1.500"/>',
    `<path d="M1 2.500h14M1 8h14M1 13.500h14" stroke="${BLUE}" stroke-width="3.200"/>`,
    `<path d="M-1.500-1.500h19v19h-19z" fill="#c9ecfb" stroke="${BLUE}"/><path d="M1.500 5v9.500h13V5" stroke="${BLUE}" stroke-width="2"/><path d="M8 9V4M5 11.500h6" stroke="${BLUE}" stroke-width="2"/><path d="M4.500 5L8 1 11.500 5z" fill="${BLUE}" stroke="none"/>`,
    `<path class="f" d="M1 1h4v4H1zM6 1h4v4H6zM11 1h4v4h-4zM11 6h4v4h-4zM1 6h4v4H1zM1 11h4v4H1zM6 11h4v4H6zM11 11h4v4h-4z" stroke="none"/><path d="M6 6h4v4H6z" fill="${BLUE}" stroke="none"/>`,
    '<path d="M8 1l7 3.500L8 8 1 4.500zM1 8l7 3.500L15 8M1 11.500L8 15l7-3.500"/>',
    '<path d="M8 2.500L14 14H2z" stroke-width="1.700"/>',
    `<path class="f" d="M1 1h4v3H1zM1 6h4v9H1zM13 7h2v8h-2z" stroke="none"/><path d="M6 1h9v4H6zM6 6h3v4H6zM10 6h2v9h-2z" fill="${BLUE}" stroke="none"/><path class="f" d="M6 11h3v4H6z" stroke="none"/>`,
    '<path d="M8 1a7 7 0 1 1-5 12L1 15V8a7 7 0 0 1 7-7z" fill="#000"/><path d="M4.500 11V6.500M4.500 8c0-2 3.500-2 3.500 0v3M8 8c0-2 3.500-2 3.500 0v3" stroke="#fff" stroke-width="1.500"/>',
    '<path class="f" d="M1 2.500h10v2.500h3.500v9.500H1z"/><path d="M2 13l4-5 3 3 2-2 3 4z" fill="#f3f3f3" stroke="none"/><path d="M13.500 .5v4M11.500 2.500h4"/>',
    `<path d="M1 4h5M3.500 1.500v5M9.500 4h5.500M1 10.500h5M1 13.500h5M10 9.500l5 5m0-5l-5 5" stroke="${BLUE}" stroke-width="1.800"/>`,
    `<path d="M1 2h14v9H1zM5 14.500h6M8 11v3M2.500 7H5l1.500-2.500 2 5L10 7h3.500" stroke="${BLUE}" stroke-width="1.300"/>`,
    '<rect x=".5" y=".5" width="15" height="15" rx="5" fill="#2277dd" stroke="none"/><text x="8" y="12" text-anchor="middle" font-size="10" style="fill:#fff">Ps</text>',
    '<path d="M5 1h6v6H5z" stroke="#e9c341"/><path d="M1 9h6v6H1z" stroke="#56b4e0"/><path d="M9 9h6v6H9z" stroke="#86c777"/><path d="M6.500 6L8 2.500 9.500 6" stroke="#e9c341"/><path d="M3 10.500v3h1.500c1 0 1-1.500 0-1.500 1 0 1-1.500 0-1.500z" stroke="#56b4e0"/><path d="M13 11c-2-1-2.500 3 0 2" stroke="#86c777"/>',
    '<path d="M4 2H1.500v3M12 2h2.500v3M4 14H1.500v-3M12 14h2.500v-3" stroke="#666"/><path d="M3.500 5l2 6m0-6l-2 6M7 5h2v6H7zM11 11V5h2v3h-2l2 3" stroke="#444"/>',
    `<path d="M10 5V1.500H2v13h8V11M4.500 5h3M4.500 8H14M4.500 11h3M12 5.500L14.500 8 12 10.500" stroke="${BLUE}" stroke-width="1.600"/>`,
    '<circle cx="8" cy="5" r="4" fill="#1c9fd9" stroke="none"/><circle cx="5" cy="11" r="4" fill="#f28a1c" stroke="none"/><circle cx="11" cy="11" r="4" fill="#179b62" stroke="none"/><path d="M8 7v3" stroke="#fff"/>',
    '<circle cx="8" cy="8" r="2.200" fill="#222"/><g fill="#222" stroke="none"><circle cx="3" cy="3.500" r="1.400"/><circle cx="11" cy="2.500" r="1.400"/><circle cx="2.500" cy="11.500" r="1.400"/><circle cx="8" cy="14" r="1.200"/><circle cx="13.500" cy="12" r="1.400"/><circle cx="14" cy="7" r="1"/></g><path d="M8 8L3 3.500M8 8l3-5.500M8 8l-5.500 3.500M8 8l5.500 4" stroke-width=".4"/>',
    '<path d="M5 1.500h6L15 5v6l-4 3.500H5L1 11V5z"/><text x="8" y="11" text-anchor="middle" font-size="8">3D</text>',
    '<path d="M5 1.500H2V5M11 1.500h3V5M5 14.500H2V11M11 14.500h3V11M1 8h14" stroke-width="1.500"/>',
    '<path d="M6 10l4-4M4 8l-2.500 3c-1.500 2 1.500 5 3.500 3.500L8 12M8 4l3-2.500C13 0 16 3 14.500 5L12 8M2 3l3 2M5 1l1 2M14 13l-3-2M11 15l-1-2"/>',
    '<circle cx="8" cy="8" r="7"/><path d="M5.500 4v4H4v4h3V4zM9 4h3v3H9zM9 8.500h3.500V12H9z"/>',
    '<circle cx="8" cy="8" r="7" fill="#f6ee19" stroke="#777"/><text x="8" y="12" text-anchor="middle" font-size="10" textLength="11" lengthAdjust="spacingAndGlyphs" style="fill:#a8a416">UV</text>',
    '<circle cx="8" cy="8" r="5.500" stroke-width="1.400"/><path d="M8 .5v6M8 9.500v6M.5 8h6M9.500 8h6" stroke-width="1.300"/>',
    '<path d="M1.500 1.500h5v5h-5zM9.500 1.500h5v5h-5zM1.500 9.500h5v5h-5zM3.500 4h1M11.500 4h1M3.500 12h1M9.500 9v3h2v3M13 9v2h2v4M9 14.500h1M8 1v6" stroke-width="1.200"/>',
    '<path d="M5 2h6l3.500 6-3.500 6H5L1.500 8z" stroke="#27318c" stroke-width="2"/><circle cx="8" cy="8" r="1.300" fill="#27318c" stroke="none"/>',
    '<path d="M11.500 2.500C8.500 2 8 3 8 5v9.500M5 7h6" stroke="#000" stroke-width="2.400"/>',
    '<path d="M6 1v13L2.500 10M10 15V2l3.500 4" stroke="#000" stroke-width="1.800"/>',
    `<path d="M2 3l4 11M2 3c3-2 5 1.500 12-.5L12.500 5l1.500 4c-4 1-6-1-9 0" stroke="${RED}" stroke-width="1.600"/>`,
    '<path d="M5 13H2V3h2.500M10 3h2v2M5 2h5v2H5zM6 6h8v9H6zM8 9h4M8 12h4" stroke="#666"/>',
    '<path d="M9 2H2v12.500h12.500V8M6 10l1-3 6-6 2 2-6 6z" stroke="#555"/>',
    '<path d="M14.500 1L9.500 7M7 5.500l4.500 4" stroke-width="2"/><path d="M6.500 6L1 10.500c1 3 4 4 7 4.500l3-5z"/><path d="M4 12l2-2M6 13.500l2-2.500M8 15l1.500-4"/>',
    '<path d="M2 7h12v8H2zM4.500 7V4c0-4 7-4 7 0v3M8 10v2.500" stroke-width="1.600"/>',
    '<circle cx="8" cy="8" r="4.300" stroke="#000" stroke-width="3"/><circle cx="8" cy="8" r="6.300" stroke="#000" stroke-width="2.500" stroke-dasharray="3 3.600"/>',
    `<path d="M6 6l8 8" stroke="${RED}" stroke-width="3.800" stroke-linecap="round"/><path d="M5 1.500c3-1 6 1.500 5.500 5L7 10C3.500 10.500.5 8 1.500 4.500L4.500 7 7 4.500z" fill="${RED}" stroke="none"/>`,
    `<path d="M4.500 3.500a6 6 0 1 0 7 0M8 1v7" stroke="${RED}" stroke-width="1.900"/>`
];
document.getElementById('plugin-icons').innerHTML =
    pluginIcons.map((p) => `<span>${icon(p)}</span>`).join('');

// Toolbox; null draws a divider
const tools = [
    '<path class="f" d="M4 1l8 8H8.500l2 5-2 1-2-5L4 12z"/>',
    '<path d="M4 1c-3 4 0 8 2 13M2.500 4h3v3h-3z"/><path class="f" d="M9 8l5.500 3-3 1-1 2.500z" stroke-width=".5"/>',
    null,
    '<path d="M4 1v9h11M1 4.500h9V15" stroke-width="2"/>',
    '<circle cx="6.500" cy="6" r="5"/><path d="M10 10l4 4" stroke-width="2"/>',
    null,
    '<path d="M4 0v6M1 3h6M3.500 8v6h2l1-2 2 2 1-2 2 2h2"/>',
    '<path d="M2 4c0-4 7-4 6 1-1 4-4 7 1 8 5 0 5-6 2-6" stroke-width="1.400"/>',
    '<path d="M1.500 1.500h13v13h-13z"/>',
    '<circle cx="8" cy="8" r="6.700"/>',
    '<path d="M4.500 2h7L15 8l-3.500 6h-7L1 8z"/>',
    null,
    '<text x="8" y="13.500" text-anchor="middle" font-size="14">字</text>',
    null,
    '<path d="M3 13L13 3M1.500 11.500l3 3M11.500 1.500l3 3"/>',
    '<path d="M3 3l10 10"/><path d="M1 1h4v4H1zM11 11h4v4h-4z" fill="#d9762b" stroke="#6b4020"/>',
    null,
    '<path d="M4 13.500h9.500V4" stroke-width="2.500"/><path d="M1.500 1.500h10v10.500H1.500z" fill="#fff"/>',
    '<path d="M1.500 1.500h13v13h-13z"/><path d="M3 3.500h11M3 8h11M3 12.500h11M5 5.800h10M5 10.300h10" stroke-width="2.200" stroke-dasharray="2.200 2.200"/>',
    null,
    '<path d="M2 14l1-3 6-6 2 2-6 6z" stroke="#8a5a33"/><path class="f" d="M8 4l4 4 2.500-4.500-2-2z"/>',
    '<path d="M1.500 8l6-6 5 5-6 6z" stroke-width="1.500"/><path d="M4 8h8l-5.500 4z" fill="#d7262c" stroke="none"/><path class="f" d="M7 2l7 6-3-6z"/><path d="M13 10l2.500 4.500H10.500z" fill="#d7262c" stroke="none"/>',
    null,
    '<path d="M8 3v10M3 8h10" stroke="#aaa" stroke-width="1.600"/>'
];
document.getElementById('toolbox').innerHTML = tools.map((t, n) => {
    if (!t) return '<hr>';
    const flyout = n === tools.length - 1 || n === 18 ? '' : ' flyout';
    return `<div class="tool${flyout}${n === 0 ? ' selected' : ''}">${icon(t)}</div>`;
}).join('');

// Rulers: 61.5px per 1000mm
const STEP = 61.5;
let h = '<path d="M3 11l8-8M7 3v9M3 7h9" stroke="#999" fill="none" stroke-dasharray="1.500 1"/>';
for (let n = -78; n <= 164; n++) {
    const x = 499 + n * STEP / 10;
    if (x < 15) continue;
    const len = n % 10 === 0 ? 5 : n % 5 === 0 ? 3 : 1.5;
    h += `<path d="M${x.toFixed(1)} ${15 - len}V15" stroke="#888" stroke-width=".8"/>`;
    if (n % 10 === 0) h += `<text x="${x}" y="9" text-anchor="middle">${Math.abs(n) * 100}</text>`;
}
h += '<text x="1516" y="9">毫米</text>';
document.getElementById('ruler-h').innerHTML = h;

let v = '';
for (let n = 161; n >= 56; n--) {
    const y = 70 + (150 - n) * STEP / 10;
    const len = n % 10 === 0 ? 5 : n % 5 === 0 ? 3 : 1.5;
    v += `<path d="M${15 - len} ${y.toFixed(1)}H15" stroke="#888" stroke-width=".8"/>`;
    if (n % 10 === 0) v += `<text transform="translate(9 ${y - 1}) rotate(-90)" text-anchor="middle">${n * 100}</text>`;
}
document.getElementById('ruler-v').innerHTML = v;

// Banner slogans, each stretched or condensed to the same line length
const slogans = [
    '态度决定一切细节决定成败',
    '得意时应善待他人，因为你失意时会需要他们',
    '人生不是一种享乐，而是一桩十分沉重的工作',
    '珍惜你现在拥有的，而不是期待自己没有的',
    '聪明出于勤奋，天才在于积累',
    '有滴水才有穿石，有小川才有大海',
    '一粒米养恩人，一石米养仇人',
    '人生最可悲的是不可以重来，最可喜的是它不需要重来',
    '种子牢记着雨滴献身的叮嘱，增强了冒尖的勇气',
    '业精于勤，荒于嬉。行成于思，毁于随',
    '一个小小的改变，往往会引起意料不到的效果'
];
const LINE = 378;
const SIZE = 23.2;
document.getElementById('banners').innerHTML = slogans.map((text) => {
    const glyph = Math.min(SIZE, LINE / text.length * 0.93);
    const scale = glyph / SIZE;
    const pitch = (LINE - glyph) / (text.length - 1);
    const spacing = pitch / scale - SIZE;
    return `<div class="banner"><span style="letter-spacing:${spacing.toFixed(2)}px;transform:scaleX(${scale.toFixed(3)})">${text}</span></div>`;
}).join('');

// Default CMYK palette
const colors = ['#231815', '#3e3a39', '#595757', '#727171', '#898989', '#9fa0a0', '#b5b5b6', '#c9caca',
    '#dcdddd', '#efefef', '#ffffff', '#1d2088', '#00a0e9', '#009944', '#fff100', '#e60012', '#e4007f',
    '#a9408a', '#f08300', '#f5b0b3', '#8c7669', '#cfcce8', '#a59aca', '#6c8dc8', '#7560ab', '#8c7fb0',
    '#4a5f98', '#5a4a70', '#6f83a3', '#0086d6', '#9fd9f6', '#b5cad8', '#97a8b0', '#6b7680', '#434a54',
    '#517069', '#3f8d76', '#6f9590', '#4fa893', '#56a868', '#5bc0cf', '#4aa3b0', '#b3ccbc', '#d5ecd5', '#a0d8a0'];
document.getElementById('swatches').innerHTML = '<div class="swatch none"></div>' +
    colors.map((c) => `<div class="swatch" style="background:${c}"></div>`).join('');
```
